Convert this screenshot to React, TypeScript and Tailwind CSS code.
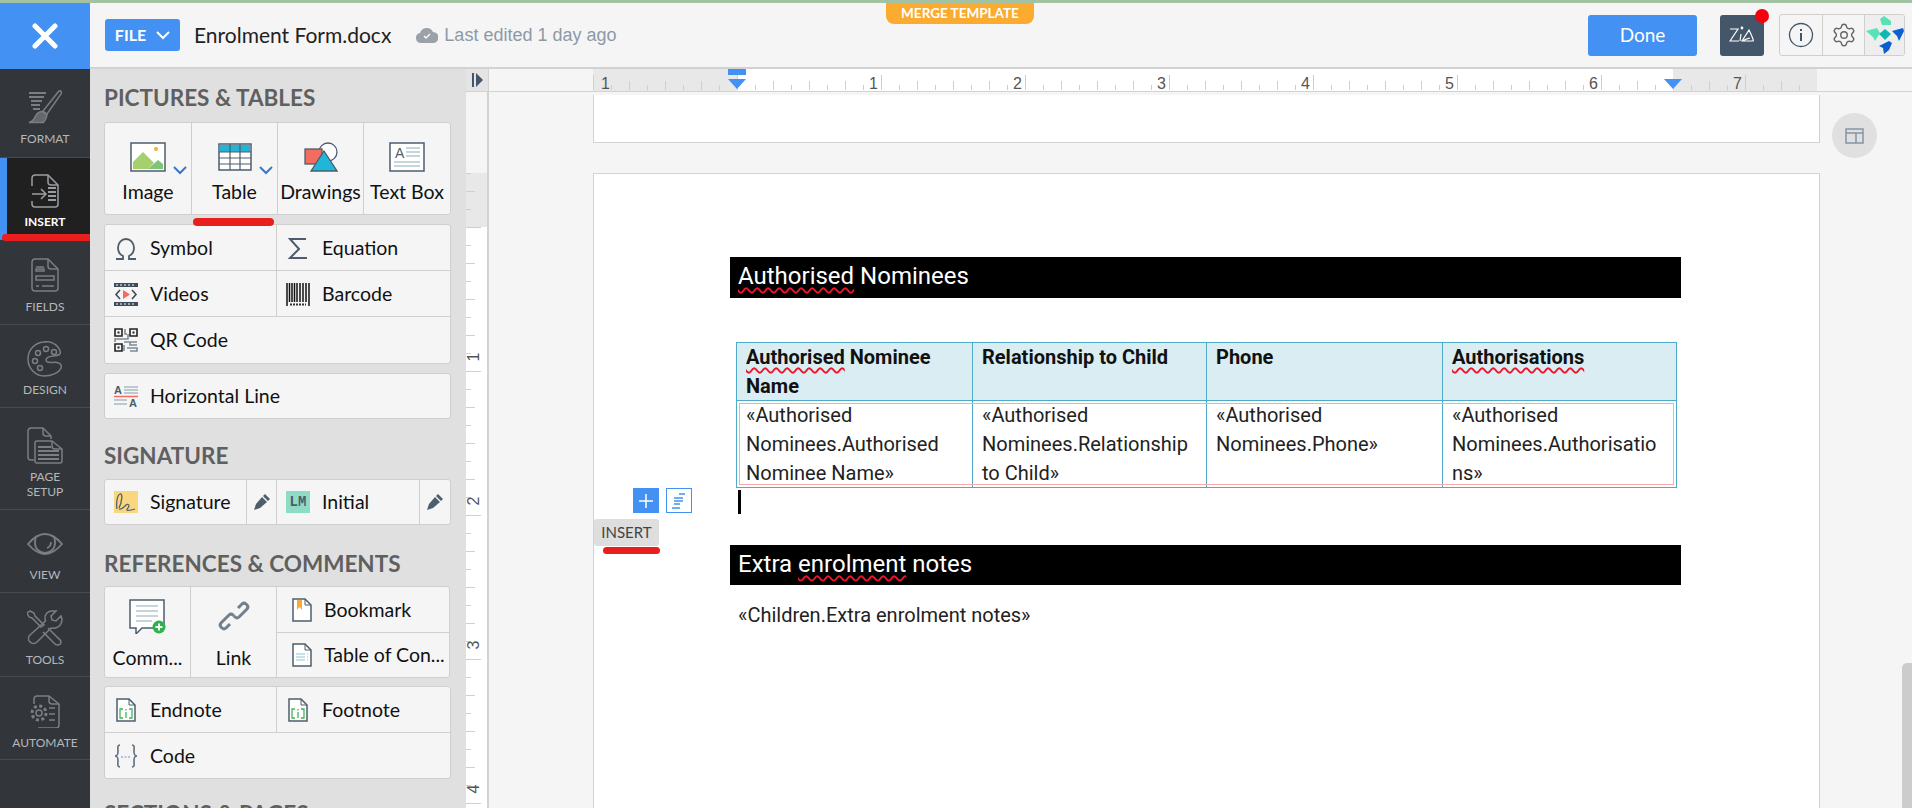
import React, { ReactNode } from 'react';
import { Settings } from 'lucide-react';

const S = '#7b7f83';

const FormatIcon = () => (
  <svg width="34" height="36" viewBox="0 0 34 36" fill="none" stroke={S} strokeWidth="1.5">
    <path d="M1 3h17M1 7h15M3 11h11M3 15h9M5 19h7" strokeWidth="2" />
    <path d="M31 1c1.6-.6 3 .8 2.4 2.4L19 24l-4-3z" />
    <path d="M14.500 21.500l4.500 3.500c-.5 3.500-2 6-3.500 7.500H1c3-1 5-2.500 6.500-6.500 1.500-3 4.500-4.500 7-4.500z" fill="#65696d" />
  </svg>
);
const InsertIcon = () => (
  <svg width="28" height="34" viewBox="0 0 28 34" fill="none" stroke="#9a9da0" strokeWidth="1.500">
    <path d="M1 12V4a3 3 0 0 1 3-3h13l10 10v19a3 3 0 0 1-3 3H4a3 3 0 0 1-3-3v-3" />
    <path d="M17 1v7a3 3 0 0 0 3 3h7" />
    <path d="M1 20h14M10 15l5 5-5 5" />
    <path d="M17 14h8M17 18h8M17 22h8M17 26h8" strokeWidth="2" />
  </svg>
);
const FieldsIcon = () => (
  <svg width="28" height="34" viewBox="0 0 28 34" fill="none" stroke={S} strokeWidth="1.500">
    <path d="M4 1h13l10 10v19a3 3 0 0 1-3 3H4a3 3 0 0 1-3-3V4a3 3 0 0 1 3-3z" />
    <path d="M17 1v7a3 3 0 0 0 3 3h7" />
    <path d="M5 9h8M5 13h8v-2H5zM5 18h18v4H5zM5 28h3M11 28h12" />
  </svg>
);
const DesignIcon = () => (
  <svg width="36" height="36" viewBox="0 0 36 36" fill="none" stroke={S} strokeWidth="1.500">
    <path d="M18 1C8 1 1 8.500 1 18s7.500 17 16 17c7 0 15-3 17-8 1-3-1-5-4-5.500-3-.5-7 .5-9.500-.5-2-1-2-3 0-4.500 3-2 8-1 12-3 3-2-2-13-14.500-13z" />
    <circle cx="11" cy="12" r="2.500" /><circle cx="19" cy="8" r="2.500" /><circle cx="27" cy="11" r="2.500" />
    <circle cx="8" cy="20" r="2.500" /><circle cx="13" cy="27" r="2.500" />
  </svg>
);
const PageSetupIcon = () => (
  <svg width="36" height="37" viewBox="0 0 36 37" fill="none" stroke={S} strokeWidth="1.500">
    <path d="M7 33H4a3 3 0 0 1-3-3V4a3 3 0 0 1 3-3h12l8 8v3" />
    <path d="M16 1v5a3 3 0 0 0 3 3h5" />
    <path d="M10 14h15l10 8v12a2 2 0 0 1-2 2H10a2 2 0 0 1-2-2V16a2 2 0 0 1 2-2z" fill="#32363a" />
    <path d="M25 14v5a3 3 0 0 0 3 3h7" />
    <path d="M11 20h13M11 24h21M11 28h21M11 32h21" strokeWidth="1.800" />
  </svg>
);
const ViewIcon = () => (
  <svg width="36" height="22" viewBox="0 0 36 22" fill="none" stroke={S} strokeWidth="1.800">
    <path d="M1 11C7 4 12 1 18 1s11 3 17 10c-6 7-11 10-17 10S7 18 1 11z" />
    <path d="M9 3c-.5 2-1 4-1 7 0 6 4.500 10 10 10s10-4 10-10c0-3-.5-5-1-7" />
    <path d="M20 15c3-1 4-3 4-6" />
  </svg>
);
const ToolsIcon = () => (
  <svg width="36" height="36" viewBox="0 0 36 36" fill="none" stroke={S} strokeWidth="1.500">
    <path d="M3 1l4 2 1 3 9 9-3 2-9-9-3-1-2-4z" />
    <path d="M21 18l9 9c2 2 4 3 4 5s-2 3-4 3-3-2-5-4l-9-9" />
    <path d="M25 1c-4 0-7 3-7 7 0 1 0 2 .5 3L3 25c-2 2-2 5 0 7 2 2 5 2 7 0L24 18c4 1 11-1 11-9l-1-3-5 5-4-1-1-4 5-5z" />
  </svg>
);
const AutomateIcon = () => (
  <svg width="30" height="33" viewBox="0 0 30 33" fill="none" stroke={S} strokeWidth="1.500">
    <path d="M4 9V4a3 3 0 0 1 3-3h12l10 8v21a3 3 0 0 1-3 3H8" />
    <path d="M19 1v5a3 3 0 0 0 3 3h7" />
    <path d="M19 13h6M19 19h6M19 25h6" />
    <circle cx="9" cy="18" r="3" />
    <circle cx="9" cy="18" r="7" strokeDasharray="3 2.500" strokeWidth="3" />
  </svg>
);

const navItems: { label: ReactNode; icon: ReactNode; cls: string; on?: boolean }[] = [
  { label: 'FORMAT', icon: <FormatIcon />, cls: 'h-[89px] pt-[21px] gap-[5px]' },
  { label: 'INSERT', icon: <InsertIcon />, cls: 'h-[82px] pt-[16px] gap-[6px]', on: true },
  { label: 'FIELDS', icon: <FieldsIcon />, cls: 'h-[85px] pt-[18px] gap-[7px]' },
  { label: 'DESIGN', icon: <DesignIcon />, cls: 'h-[83px] pt-[16px] gap-[5px]' },
  { label: <>PAGE<br />SETUP</>, icon: <PageSetupIcon />, cls: 'h-[102px] pt-[19px] gap-[5px]' },
  { label: 'VIEW', icon: <ViewIcon />, cls: 'h-[83px] pt-[23px] gap-[12px]' },
  { label: 'TOOLS', icon: <ToolsIcon />, cls: 'h-[84px] pt-[17px] gap-[6px]' },
  { label: 'AUTOMATE', icon: <AutomateIcon />, cls: 'h-[83px] pt-[18px] gap-[7px]' },
];

const Sidebar = () => (
  <aside className="relative w-[90px] shrink-0 bg-[#32363a]">
    <div className="flex h-[66px] items-center justify-center bg-[#4391f3]">
      <svg width="26" height="26" viewBox="0 0 26 26" stroke="#fff" strokeWidth="5" strokeLinecap="round"><path d="M3 3l20 20M23 3L3 23" /></svg>
    </div>
    {navItems.map((n, i) => (
      <div
        key={i}
        className={`flex flex-col items-center border-b border-[#484b4e] text-center text-[12px] leading-[15px] ${n.cls} ${n.on ? 'border-l-[7px] border-l-[#4391f3] bg-[#202020] pr-[7px] font-bold text-white' : 'text-[#b4b8bc]'}`}
      >
        {n.icon}
        <span>{n.label}</span>
      </div>
    ))}
    <div className="absolute left-[2px] top-[231px] h-[7px] w-[90px] rounded-full bg-[#e81f1f]" />
  </aside>
);

const Frame = ({ w = 36, h = 30, children }: { w?: number; h?: number; children: ReactNode }) => (
  <svg width={w} height={h} viewBox={`0 0 ${w} ${h}`} fill="none">{children}</svg>
);
const Chevron = () => (
  <svg width="14" height="9" viewBox="0 0 14 9" fill="none" stroke="#3a77c4" strokeWidth="2"><path d="M1 1l6 6 6-6" /></svg>
);
const ImageIcon = () => (
  <Frame>
    <rect x="1" y="1" width="34" height="28" fill="#fff" stroke="#4e5d6c" strokeWidth="1.500" />
    <circle cx="26" cy="7" r="2" fill="#fbab2f" />
    <path d="M3 27v-7l10-10 11 11-6 6z" fill="#a6d06e" />
    <path d="M18 27l10-9 5 4v5z" fill="#7ec576" />
  </Frame>
);
const TableIcon = () => (
  <Frame w={34} h={28}>
    <rect x="1" y="1" width="32" height="26" fill="#fff" stroke="#4e5d6c" strokeWidth="1.500" />
    <rect x="2" y="2" width="30" height="7" fill="#1fb6d8" />
    <path d="M1 9h32M1 15h32M1 21h32M12 1v26M22 1v26" stroke="#4e5d6c" strokeWidth="1.200" />
  </Frame>
);
const DrawingsIcon = () => (
  <Frame w={34} h={30}>
    <circle cx="24" cy="10" r="9" fill="#fff" stroke="#4e5d6c" strokeWidth="1.300" />
    <rect x="1" y="7" width="17" height="15" fill="#f26c60" stroke="#4e5d6c" strokeWidth="1.300" />
    <path d="M20 9l13 20H7z" fill="#1fb6d8" stroke="#4e5d6c" strokeWidth="1.300" />
  </Frame>
);
const TextBoxIcon = () => (
  <Frame>
    <rect x="1" y="1" width="34" height="28" fill="#fff" stroke="#4e5d6c" strokeWidth="1.500" />
    <text x="6" y="16" fontSize="14" fontFamily="Liberation Sans" fill="#4e5d6c">A</text>
    <path d="M17 6h14M17 10h14M17 14h14M5 20h26M5 24h26" stroke="#b4c8cc" strokeWidth="1.300" />
  </Frame>
);
const I24 = ({ children }: { children: ReactNode }) => (
  <svg width="24" height="24" viewBox="0 0 24 24" fill="none">{children}</svg>
);
const SymbolIcon = () => (
  <I24><path d="M2 23h7v-3c-3-1.500-5-4.500-5-8 0-5 3.500-9 8-9s8 4 8 9c0 3.500-2 6.500-5 8v3h7" stroke="#4e5d6c" strokeWidth="1.800" /></I24>
);
const EquationIcon = () => (
  <I24><path d="M20 3H4l9 10-9 9h17" stroke="#4e5d6c" strokeWidth="2" /></I24>
);
const VideosIcon = () => (
  <I24>
    <rect y="1" width="24" height="4" fill="#3f4c59" /><rect y="20" width="24" height="4" fill="#3f4c59" />
    <path d="M2 3h20M2 22h20" stroke="#fff" strokeDasharray="2 2" />
    <path d="M6 8l-4 4.500 4 4.500M18 8l4 4.500-4 4.500" stroke="#3f4c59" strokeWidth="1.600" />
    <path d="M9 8l7 4.500-7 4.500z" fill="#f26c60" />
  </I24>
);
const BarcodeIcon = () => (
  <I24><path d="M1 1v23M3.500 1v19M6 1v19M8.500 1v19M11 1v19M14 1v19M17 1v19M20 1v19M23 1v23" stroke="#111" strokeWidth="1.500" /><path d="M4 22.500h16" stroke="#333" strokeWidth="2" strokeDasharray="2 1" /></I24>
);
const QrIcon = () => (
  <I24>
    <path d="M1 1h7v7H1zM16 1h7v7h-7zM1 16h7v7H1z" stroke="#222" strokeWidth="1.600" />
    <path d="M3.500 3.500h2v2h-2zM18.500 3.500h2v2h-2zM3.500 18.500h2v2h-2z" fill="#222" />
    <path d="M11 1v5h2M14 6v5H1v3M10 14h13M10 17v6M13 20h10v3h-7M16 14v3h7" stroke="#7d8a95" strokeWidth="1.600" />
  </I24>
);
const HLineIcon = () => (
  <I24>
    <text x="0" y="10" fontSize="11" fontFamily="Liberation Sans" fontWeight="700" fill="#4e5d6c">A</text>
    <path d="M10 3h14M10 6h14M10 9h14" stroke="#a9bcc0" strokeWidth="1.300" />
    <path d="M0 12.500h24" stroke="#f26c60" strokeWidth="1.600" />
    <text x="15" y="23" fontSize="11" fontFamily="Liberation Sans" fontWeight="700" fill="#4e5d6c">A</text>
    <path d="M0 16h13M0 20h13" stroke="#a9bcc0" strokeWidth="1.300" />
  </I24>
);
const SigIcon = () => (
  <svg width="24" height="22" viewBox="0 0 24 22" fill="none">
    <rect width="24" height="22" fill="#f9d77e" />
    <path d="M3 18c-1-5 0-14 3-15s2 8-1 14M5 18c3 1 5-2 7-4 1-1 3-1 3 1s-3 3-2 4 5 0 8-1" stroke="#55616e" strokeWidth="1.300" />
  </svg>
);
const Pencil = () => (
  <svg width="16" height="16" viewBox="0 0 16 16"><path d="M11 0l5 5-2 2-5-5zM8 3l5 5-7 6-6 2 2-6z" fill="#4e5d6c" /></svg>
);
const CommentIcon = () => (
  <Frame w={37} h={35}>
    <path d="M1 1h34v28H13l-6 6v-6H1z" fill="#fff" stroke="#4e5d6c" strokeWidth="1.500" />
    <path d="M7 7h22M7 12h22M7 17h22M7 22h16" stroke="#b4c8cc" strokeWidth="1.300" />
    <circle cx="30" cy="28" r="6.500" fill="#2fb24c" />
    <path d="M30 24.500v7M26.500 28h7" stroke="#fff" strokeWidth="1.800" />
  </Frame>
);
const LinkIcon = () => (
  <Frame w={34} h={34}>
    <g fill="none" stroke="#72808d" strokeWidth="3">
      <path d="M13 25l-4 4a3 3 0 0 1-4 0l-1-1a3 3 0 0 1 0-4l8-8a3 3 0 0 1 4 0l1 1" />
      <path d="M21 9l4-4a3 3 0 0 1 4 0l1 1a3 3 0 0 1 0 4l-8 8a3 3 0 0 1-4 0l-1-1" />
    </g>
  </Frame>
);
const PageShape = ({ children }: { children?: ReactNode }) => (
  <svg width="20" height="24" viewBox="0 0 20 24" fill="none">
    <path d="M1 1h12l6 6v16H1z" fill="#fff" stroke="#4e5d6c" strokeWidth="1.500" />
    <path d="M13 1v6h6" stroke="#4e5d6c" />
    {children}
  </svg>
);
const BookmarkIcon = () => <PageShape><path d="M5 2h5v10l-2.500-3L5 12z" fill="#fbab2f" /></PageShape>;
const TocIcon = () => <PageShape><path d="M4 11h9M4 14h9M4 17h9M15 11h1M15 14h1M15 17h1" stroke="#8fc6d8" strokeWidth="1.200" /></PageShape>;
const NoteIcon = () => (
  <PageShape><path d="M7 11H4v9h3M13 11h3v9h-3M10 11v1.500M10 14v6" stroke="#3fb45a" strokeWidth="1.300" /></PageShape>
);
const CodeIcon = () => (
  <svg width="24" height="24" viewBox="0 0 24 24" fill="none">
    <path d="M6 1C3 1 4 4 4 8c0 3-2 4-3 4 1 0 3 1 3 4 0 4-1 7 2 7M18 1c3 0 2 3 2 7 0 3 2 4 3 4-1 0-3 1-3 4 0 4 1 7-2 7" stroke="#5f6e7c" strokeWidth="1.600" />
    <path d="M7 13h10" stroke="#8fb4e8" strokeWidth="1.300" strokeDasharray="2 1.500" />
  </svg>
);

const Heading = ({ cls, children }: { cls: string; children: ReactNode }) => (
  <h2 className={`h-[28px] text-[22.500px] font-bold leading-[30px] text-[#5f5f5f] ${cls}`}>{children}</h2>
);
const Card = ({ cls, children }: { cls: string; children: ReactNode }) => (
  <div className={`overflow-hidden rounded-[3px] border border-[#cfcfcf] bg-[#f5f5f5] ${cls}`}>{children}</div>
);
const Tall = ({ icon, label, chevron, cls, gap = 'mt-[8px]' }: { icon: ReactNode; label: string; chevron?: boolean; cls: string; gap?: string }) => (
  <div className={`relative flex flex-col items-center border-r border-[#cfcfcf] text-[19.500px] leading-[24px] text-[#111] last:border-r-0 ${cls}`}>
    <div className="flex h-[30px] items-center">{icon}</div>
    <span className={`whitespace-nowrap ${gap}`}>{label}</span>
    {chevron && <span className="absolute right-[4px] top-[43px]"><Chevron /></span>}
  </div>
);
const Row = ({ icon, label, cls = '' }: { icon: ReactNode; label: string; cls?: string }) => (
  <div className={`flex items-center pl-[9px] text-[19.500px] text-[#111] ${cls}`}>
    <span className="flex w-[36px] shrink-0">{icon}</span>
    <span className="whitespace-nowrap">{label}</span>
  </div>
);

const Panel = () => (
  <div className="relative w-[375px] shrink-0 overflow-hidden bg-[#e0e0e0] pl-[14px] pt-[14px]">
    <Heading cls="">PICTURES &amp; TABLES</Heading>
    <Card cls="mt-[11px] flex h-[93px] w-[347px]">
      <Tall cls="w-[87px] pt-[19px]" icon={<ImageIcon />} label="Image" chevron />
      <Tall cls="w-[86px] pt-[19px]" icon={<TableIcon />} label="Table" chevron />
      <Tall cls="w-[86px] pt-[19px]" icon={<DrawingsIcon />} label="Drawings" />
      <Tall cls="flex-1 pt-[19px]" icon={<TextBoxIcon />} label="Text Box" />
    </Card>
    <Card cls="mt-[9px] w-[347px]">
      <div className="flex border-b border-[#cfcfcf]">
        <Row cls="h-[45px] w-[172px] border-r border-[#cfcfcf]" icon={<SymbolIcon />} label="Symbol" />
        <Row cls="h-[45px]" icon={<EquationIcon />} label="Equation" />
      </div>
      <div className="flex border-b border-[#cfcfcf]">
        <Row cls="h-[45px] w-[172px] border-r border-[#cfcfcf]" icon={<VideosIcon />} label="Videos" />
        <Row cls="h-[45px]" icon={<BarcodeIcon />} label="Barcode" />
      </div>
      <Row cls="h-[46px]" icon={<QrIcon />} label="QR Code" />
    </Card>
    <Card cls="mt-[9px] w-[347px]"><Row cls="h-[44px]" icon={<HLineIcon />} label="Horizontal Line" /></Card>
    <Heading cls="mt-[22px]">SIGNATURE</Heading>
    <Card cls="mt-[10px] flex h-[46px] w-[347px]">
      <Row cls="h-[44px] w-[142px] border-r border-[#cfcfcf]" icon={<SigIcon />} label="Signature" />
      <div className="flex w-[30px] items-center justify-center border-r border-[#cfcfcf]"><Pencil /></div>
      <Row cls="h-[44px] w-[143px] border-r border-[#cfcfcf]" label="Initial" icon={
        <span className="flex h-[22px] w-[24px] items-center justify-center bg-[#8fdcc6] font-['Liberation_Mono',monospace] text-[14px] font-bold text-[#4e5d6c]">LM</span>
      } />
      <div className="flex flex-1 items-center justify-center"><Pencil /></div>
    </Card>
    <Heading cls="mt-[24px]">REFERENCES &amp; COMMENTS</Heading>
    <Card cls="mt-[9px] flex h-[92px] w-[346px]">
      <Tall cls="w-[86px] pt-[14px]" gap="mt-[15px]" icon={<CommentIcon />} label="Comm..." />
      <Tall cls="w-[86px] pt-[14px]" gap="mt-[15px]" icon={<LinkIcon />} label="Link" />
      <div className="flex-1">
        <Row cls="h-[46px] border-b border-[#cfcfcf] pl-[15px] [&>span:first-child]:w-[32px]" icon={<BookmarkIcon />} label="Bookmark" />
        <Row cls="h-[44px] pl-[15px] [&>span:first-child]:w-[32px]" icon={<TocIcon />} label="Table of Con..." />
      </div>
    </Card>
    <Card cls="mt-[8px] w-[347px]">
      <div className="flex border-b border-[#cfcfcf]">
        <Row cls="h-[45px] w-[172px] border-r border-[#cfcfcf] pl-[11px] [&>span:first-child]:w-[34px]" icon={<NoteIcon />} label="Endnote" />
        <Row cls="h-[45px] pl-[11px] [&>span:first-child]:w-[34px]" icon={<NoteIcon />} label="Footnote" />
      </div>
      <Row cls="h-[45px]" icon={<CodeIcon />} label="Code" />
    </Card>
    <Heading cls="mt-[20px]">SECTIONS &amp; PAGES</Heading>
    <div className="absolute left-[103px] top-[149px] h-[8px] w-[81px] rounded-full bg-[#e81f1f]" />
  </div>
);

const Header = () => (
  <header className="relative flex h-[66px] shrink-0 items-center border-b-2 border-[#d2d2d2] bg-[#f5f5f5] pl-[15px] pr-[7px]">
    <div className="flex h-[32px] w-[75px] items-center justify-center gap-[10px] rounded-[3px] bg-[#4391f3] text-[16px] font-bold text-white">
      FILE
      <svg width="14" height="9" viewBox="0 0 14 9" fill="none" stroke="#fff" strokeWidth="2"><path d="M1 1l6 6 6-6" /></svg>
    </div>
    <span className="ml-[14px] text-[21px] text-[#222]">Enrolment Form.docx</span>
    <svg className="ml-[25px]" width="22" height="15" viewBox="0 0 22 15">
      <path d="M5 15a5 5 0 0 1-1-9.900A7 7 0 0 1 17 4a5.500 5.500 0 0 1 0 11z" fill="#9aa1a8" />
      <path d="M8 8l2 2 4-4" stroke="#fff" strokeWidth="1.300" fill="none" />
    </svg>
    <span className="ml-[6px] font-['Liberation_Sans',sans-serif] text-[18px] text-[#8e99a6]">Last edited 1 day ago</span>
    <div className="absolute left-[796px] top-0 flex h-[21px] w-[148px] items-center justify-center rounded-b-[8px] bg-[#fbab2f] text-[13.500px] font-bold leading-none text-white">MERGE TEMPLATE</div>
    <div className="ml-auto flex h-[41px] w-[109px] items-center justify-center rounded-[3px] bg-[#4391f3] text-[19px] text-white">Done</div>
    <div className="relative ml-[23px] flex h-[41px] w-[44px] items-center justify-center rounded-[3px] bg-[#43566a]">
      <svg width="26" height="18" viewBox="0 0 26 18" fill="none" stroke="#fff" strokeWidth="1.200">
        <path d="M1 3h8L1 15h9M12 8l-1 7M20 4l-7 11h11c1 0-1-5-4-11zM14 15c3-3 5-2 7-3" />
        <circle cx="13" cy="2" r=".8" fill="#fff" />
      </svg>
      <span className="absolute right-[-5px] top-[-6px] h-[14px] w-[14px] rounded-full bg-[#f5000f]" />
    </div>
    <div className="ml-[15px] flex h-[42px] w-[126px] items-stretch overflow-hidden rounded-[3px] border border-[#cfcfcf]">
      <div className="flex w-[43px] items-center justify-center border-r border-[#cfcfcf]">
        <svg width="26" height="26" viewBox="0 0 26 26" fill="none" stroke="#43566a" strokeWidth="1.300">
          <circle cx="13" cy="13" r="11.500" /><path d="M13 11v8M13 7v2" strokeWidth="2" />
        </svg>
      </div>
      <div className="flex w-[42px] items-center justify-center border-r border-[#cfcfcf]">
        <Settings size={26} strokeWidth={1.300} color="#666" />
      </div>
      <div className="flex flex-1 items-center justify-center bg-[#eeeeee]">
        <svg width="38" height="38" viewBox="0 0 38 38">
          <path d="M18 0l7 5v4H16l-2-6z" fill="#58e2b8" />
          <path d="M0 15l11-3 3 5-5 8-2-4z" fill="#58e2b8" />
          <path d="M13 18l6-5 6 5-6 6z" fill="#0eb9b5" />
          <path d="M26 15l11-3 1 3-5 10-2-5z" fill="#0b5fd0" />
          <path d="M13 30l10-5 3 2-3 7-5 4-1-6z" fill="#0b5fd0" />
        </svg>
      </div>
    </div>
  </header>
);

// page left edge is at 593 and the ruler svg starts at 489
const tickX = Array.from({ length: 68 }, (_, i) => i);
const Ruler = () => (
  <svg width="1328" height="22" viewBox="0 0 1328 22" className="block shrink-0">
    <rect x="104" width="144" height="22" fill="#e8e8e8" />
    <rect x="248" width="936" height="22" fill="#fff" />
    <rect x="1184" width="144" height="22" fill="#e8e8e8" />
    {tickX.map((i) => {
      const len = i % 8 === 0 ? 15 : i % 2 === 0 ? 9 : 5;
      const x = 104 + i * 18;
      return <line key={i} x1={x + 0.5} x2={x + 0.5} y1={21 - len} y2={21} stroke="#cfcfcf" />;
    })}
    {[['1', 112], ['1', 380], ['2', 524], ['3', 668], ['4', 812], ['5', 956], ['6', 1100], ['7', 1244]].map(([t, x]) => (
      <text key={String(x)} x={x as number} y="20" fontSize="16" fill="#555" fontFamily="Liberation Sans">{t}</text>
    ))}
    <rect x="239" width="18" height="6" fill="#4391f3" />
    <path d="M239 10h18l-9 10z" fill="#4391f3" />
    <path d="M1175 10h18l-9 10z" fill="#4391f3" />
  </svg>
);
const vTicks = Array.from({ length: 36 }, (_, i) => i);
const VRuler = () => (
  <svg width="22" height="716" viewBox="0 0 22 716" className="block">
    <rect width="22" height="81" fill="#f5f5f5" />
    <rect y="81" width="21" height="54" fill="#e8e8e8" />
    <rect y="135" width="21" height="581" fill="#fff" />
    {vTicks.map((i) => {
      const len = (i + 5) % 8 === 0 ? 15 : (i + 5) % 2 === 0 ? 9 : 5;
      const y = 81 + i * 18;
      return <line key={i} y1={y + 0.5} y2={y + 0.5} x1={0} x2={len} stroke="#cfcfcf" />;
    })}
    {[270, 414, 558, 702].map((y, i) => (
      <text key={y} x="18" y={y} fontSize="16" fill="#555" fontFamily="Liberation Sans" textAnchor="middle" transform={`rotate(-90 13 ${y})`}>{i + 1}</text>
    ))}
  </svg>
);

const Squiggle = ({ children }: { children: ReactNode }) => (
  <span className="underline decoration-[#f0142a] decoration-wavy decoration-[1.500px] underline-offset-[3px]">{children}</span>
);
const Bar = ({ cls, children }: { cls: string; children: ReactNode }) => (
  <div className={`flex w-[951px] items-center bg-black pb-[3px] pl-[8px] text-[24px] text-white ${cls}`}>
    <span>{children}</span>
  </div>
);
const cell = 'border-r border-[#4dabc9] px-[9px] last:border-r-0';

const Table = () => (
  <div className="relative ml-[6px] w-[941px] border border-[#4dabc9] text-[20px] leading-[29px] text-[#222]">
    <div className="grid h-[58px] grid-cols-[236px_234px_236px_1fr] border-b border-[#4dabc9] bg-[#daedf3] font-bold text-[#111]">
      <div className={cell}><Squiggle>Authorised</Squiggle> Nominee Name</div>
      <div className={cell}>Relationship to Child</div>
      <div className={cell}>Phone</div>
      <div className={cell}><Squiggle>Authorisations</Squiggle></div>
    </div>
    <div className="grid h-[86px] grid-cols-[236px_234px_236px_1fr]">
      <div className={cell}>«Authorised<br />Nominees.Authorised<br />Nominee Name»</div>
      <div className={cell}>«Authorised<br />Nominees.Relationship<br />to Child»</div>
      <div className={cell}>«Authorised<br />Nominees.Phone»</div>
      <div className={cell}>«Authorised<br />Nominees.Authorisatio<br />ns»</div>
    </div>
    <div className="absolute inset-x-[2px] bottom-[2px] top-[60px] border border-[#f9a8ac]" />
  </div>
);

const Doc = () => (
  <div className="relative flex min-w-0 flex-1 flex-col overflow-hidden bg-[#f5f5f5]">
    <div className="flex h-[23px] shrink-0 border-b border-[#d2d2d2]">
      <div className="w-[1px] bg-[#e0e0e0]" />
      <div className="flex w-[23px] items-center justify-center border-r border-[#d2d2d2] bg-[#e4e4e4]">
        <svg width="11" height="14" viewBox="0 0 11 14" fill="#43566a"><rect width="2" height="14" /><path d="M4 0l7 7-7 7z" /></svg>
      </div>
      <Ruler />
    </div>
    <div className="flex min-h-0 flex-1">
      <div className="w-[1px] shrink-0 bg-[#e0e0e0]" />
      <div className="w-[23px] shrink-0 overflow-hidden border-r-2 border-[#d2d2d2]"><VRuler /></div>
      <div className="ml-[104px] w-[1227px] shrink-0 pt-[3px]">
        <div className="h-[48px] border border-t-0 border-[#d2d2d2] bg-white" />
        <div className="relative mt-[30px] h-[700px] border border-[#d2d2d2] bg-white pl-[136px] pt-[83px] font-['Roboto',sans-serif]">
          <Bar cls="h-[41px]"><Squiggle>Authorised</Squiggle> Nominees</Bar>
          <div className="h-[44px]" />
          <Table />
          <div className="ml-[8px] mt-[2px] h-[55px]">
            <div className="h-[24px] w-[3px] bg-black" />
          </div>
          <Bar cls="h-[40px]">Extra&nbsp;<Squiggle>enrolment</Squiggle> notes</Bar>
          <p className="ml-[8px] mt-[16px] text-[20px] leading-[29px] text-[#222]">«Children.Extra enrolment notes»</p>
          <div className="absolute left-[39px] top-[314px] flex h-[25px] w-[26px] items-center justify-center bg-[#4391f3]">
            <svg width="14" height="14" viewBox="0 0 14 14" stroke="#fff" strokeWidth="1.500"><path d="M7 0v14M0 7h14" /></svg>
          </div>
          <div className="absolute left-[72px] top-[314px] flex h-[25px] w-[26px] items-center justify-center border border-[#4391f3] bg-white">
            <svg width="16" height="16" viewBox="0 0 16 16" stroke="#4391f3" strokeWidth="1.500"><path d="M8 1h6M3 5h9M3 8h9M3 11h6M1 15h8" /></svg>
          </div>
          <div className="absolute left-0 top-[345px] flex h-[27px] w-[65px] items-center justify-center rounded-[3px] bg-[#dedede] font-['Lato',sans-serif] text-[15px] text-[#444]">INSERT</div>
          <div className="absolute left-[9px] top-[373px] h-[7px] w-[57px] rounded-full bg-[#e81f1f]" />
        </div>
      </div>
    </div>
    <div className="absolute left-[1367px] top-[44px] flex h-[45px] w-[45px] items-center justify-center rounded-full bg-[#e0e0e0]">
      <svg width="19" height="16" viewBox="0 0 19 16" fill="none" stroke="#8494a4" strokeWidth="1.500"><rect x="1" y="1" width="17" height="14" /><path d="M1 5h17M11 5v10" /></svg>
    </div>
    <div className="absolute bottom-0 right-0 h-[145px] w-[10px] rounded-tl-[5px] bg-[#cccccc]" />
  </div>
);

export default function App() {
  return (
    <div className="flex h-[808px] w-[1912px] flex-col overflow-hidden bg-[#f5f5f5] font-['Lato',sans-serif]">
      <div className="h-[3px] shrink-0 bg-[#a3c2a3]" />
      <div className="flex min-h-0 flex-1">
        <Sidebar />
        <div className="flex min-w-0 flex-1 flex-col">
          <Header />
          <div className="flex min-h-0 flex-1">
            <Panel />
            <Doc />
          </div>
        </div>
      </div>
    </div>
  );
}
